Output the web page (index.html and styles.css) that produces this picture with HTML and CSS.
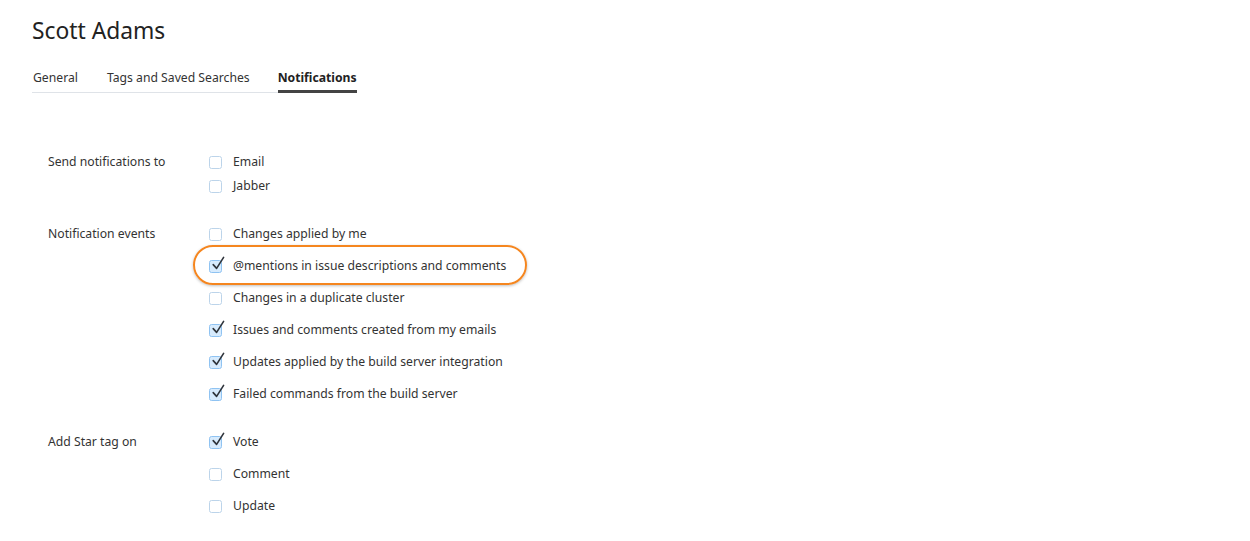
FILE: index.html
```html
<!DOCTYPE html>
<html lang="en">
<head>
<meta charset="utf-8">
<title>Scott Adams</title>
<link rel="stylesheet" href="styles.css">
</head>
<body>
<div class="page">
  <h1 class="title">Scott Adams</h1>
  <nav class="tabs">
    <span class="tab">General</span>
    <span class="tab">Tags and Saved Searches</span>
    <span class="tab active">Notifications</span>
  </nav>

  <div class="form">
    <div class="group group-tight">
      <div class="label">Send notifications to</div>
      <div class="options">
        <label class="opt"><span class="cb"></span><span>Email</span></label>
        <label class="opt"><span class="cb"></span><span>Jabber</span></label>
      </div>
    </div>

    <div class="group">
      <div class="label">Notification events</div>
      <div class="options">
        <label class="opt"><span class="cb"></span><span>Changes applied by me</span></label>
        <label class="opt highlight"><span class="cb on"><svg viewBox="0 0 16 16"><path d="M3.2 8.6 L6.6 12.4 L13.6 1.4"/></svg></span><span>@mentions in issue descriptions and comments</span></label>
        <label class="opt"><span class="cb"></span><span>Changes in a duplicate cluster</span></label>
        <label class="opt"><span class="cb on"><svg viewBox="0 0 16 16"><path d="M3.2 8.6 L6.6 12.4 L13.6 1.4"/></svg></span><span>Issues and comments created from my emails</span></label>
        <label class="opt"><span class="cb on"><svg viewBox="0 0 16 16"><path d="M3.2 8.6 L6.6 12.4 L13.6 1.4"/></svg></span><span>Updates applied by the build server integration</span></label>
        <label class="opt"><span class="cb on"><svg viewBox="0 0 16 16"><path d="M3.2 8.6 L6.6 12.4 L13.6 1.4"/></svg></span><span>Failed commands from the build server</span></label>
      </div>
    </div>

    <div class="group">
      <div class="label">Add Star tag on</div>
      <div class="options">
        <label class="opt"><span class="cb on"><svg viewBox="0 0 16 16"><path d="M3.2 8.6 L6.6 12.4 L13.6 1.4"/></svg></span><span>Vote</span></label>
        <label class="opt"><span class="cb"></span><span>Comment</span></label>
        <label class="opt"><span class="cb"></span><span>Update</span></label>
      </div>
    </div>
  </div>
</div>
</body>
</html>
```
FILE: styles.css
```css
html, body {
  margin: 0;
  padding: 0;
  background: #ffffff;
}
body {
  font-family: "Noto Sans", "Open Sans", "DejaVu Sans", sans-serif;
  color: #333333;
  font-size: 12.2px;
}
.page {
  padding: 15px 0 0 32px;
}
.title {
  margin: 0;
  font-size: 22.8px;
  font-weight: 400;
  line-height: 32px;
  color: #222;
}
.tabs {
  display: flex;
  width: max-content;
  margin-top: 23px;
  border-bottom: 1px solid #dfe3e8;
  white-space: nowrap;
}
.tab {
  padding: 0 0 6px 0;
  margin-right: 28px;
  line-height: 16px;
  font-size: 12.2px;
  color: #333;
}
.tab:first-child { padding-left: 1px; margin-right: 29px; }
.tab:last-child { margin-right: 0; }
.tab.active {
  font-weight: 700;
  color: #222;
  border-bottom: 3px solid #444444;
  margin-bottom: -1px;
  padding-bottom: 4px;
}
.form {
  padding: 61px 0 0 16px;
}
.group {
  display: flex;
  margin-bottom: 32px;
}
.label {
  width: 161px;
  line-height: 16px;
}
.options {
  display: flex;
  flex-direction: column;
  gap: 16px;
}
.group-tight .options { gap: 8px; }
.opt {
  position: relative;
  display: flex;
  align-items: center;
  gap: 11px;
  line-height: 16px;
  height: 16px;
}
.cb {
  position: relative;
  width: 11px;
  height: 11px;
  border: 1px solid #bcd4ea;
  border-radius: 2.5px;
  background: #fff;
  flex: none;
}
.cb.on {
  background: #d7ebfd;
  border-color: #8fc3f2;
}
.cb svg {
  position: absolute;
  left: 0;
  top: -6px;
  width: 16px;
  height: 18px;
  overflow: visible;
}
.cb svg path {
  fill: none;
  stroke: #2f343b;
  stroke-width: 1.6;
  stroke-linecap: round;
  stroke-linejoin: round;
}
.highlight::before {
  content: "";
  position: absolute;
  left: -16px;
  top: -13px;
  width: 330px;
  height: 36px;
  border: 2px solid #f5861f;
  border-radius: 20px;
  box-shadow: 0 1px 3px rgba(0,0,0,0.25);
}
```
